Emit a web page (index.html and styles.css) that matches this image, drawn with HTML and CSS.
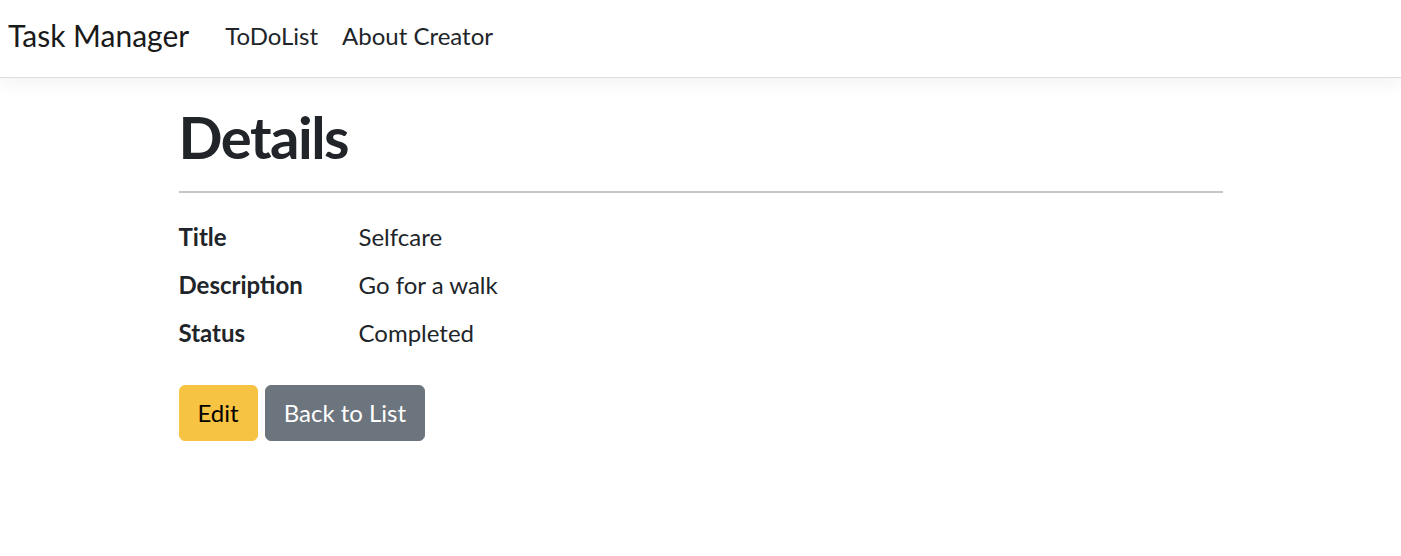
FILE: index.html
```html
<!DOCTYPE html>
<html lang="en">
<head>
<meta charset="utf-8">
<title>Details - Task Manager</title>
<link rel="stylesheet" href="styles.css">
</head>
<body>
<header class="navbar">
  <a class="brand" href="#">Task Manager</a>
  <nav class="nav">
    <a class="nav-link" href="#">ToDoList</a>
    <a class="nav-link" href="#">About Creator</a>
  </nav>
</header>
<main class="container">
  <h1 class="title">Details</h1>
  <hr class="rule">
  <dl class="details">
    <dt>Title</dt><dd>Selfcare</dd>
    <dt>Description</dt><dd>Go for a walk</dd>
    <dt>Status</dt><dd>Completed</dd>
  </dl>
  <div class="actions">
    <a class="btn btn-warning" href="#">Edit</a>
    <a class="btn btn-secondary" href="#">Back to List</a>
  </div>
</main>
</body>
</html>
```
FILE: styles.css
```css
* { box-sizing: border-box; }
html, body { margin: 0; padding: 0; }
body {
  font-family: Lato, "Noto Sans", "Liberation Sans", sans-serif;
  font-size: 24px;
  line-height: 1.5;
  color: #212529;
  background: #fff;
}
a { text-decoration: none; }

.navbar {
  display: flex;
  align-items: center;
  height: 78px;
  padding: 0 8px 6px;
  border-bottom: 1px solid #dedede;
  box-shadow: 0 6px 18px rgba(0,0,0,.05);
  background: #fff;
}
.brand {
  font-size: 30px;
  color: #1a1a1a;
  margin-right: 24px;
  line-height: 45px;
}
.nav { display: flex; }
.nav-link {
  color: #212529;
  padding: 0 12px;
  font-size: 24px;
  line-height: 36px;
}

.container {
  width: 1080px;
  margin: 0 auto;
  padding: 0 0 0 18px;
  margin-top: 23px;
}
.title {
  font-size: 58px;
  font-weight: 700;
  letter-spacing: -1.5px;
  line-height: 72px;
  margin: 0;
}
.rule {
  border: 0;
  border-top: 2px solid #c6c6c6;
  margin: 18px 0 26px;
  width: 1044px;
}
.details {
  display: grid;
  grid-template-columns: 180px 1fr;
  margin: 0 0 22px;
}
.details dt { font-weight: 700; margin: 0 0 12px; }
.details dd { margin: 0 0 12px; }

.actions { display: flex; gap: 7px; }
.btn {
  display: inline-block;
  padding: 9px 18px;
  border: 1px solid transparent;
  border-radius: 6px;
  font-size: 24px;
  line-height: 36px;
}
.btn-warning { background: #f7c342; border-color: #f7c342; color: #000; }
.btn-secondary { background: #6c757d; border-color: #6c757d; color: #fff; }
```
